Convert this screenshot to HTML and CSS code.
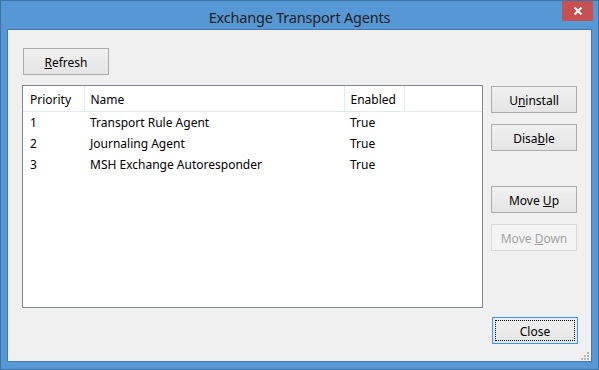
FILE: index.html
```html
<!DOCTYPE html>
<html lang="en">
<head>
<meta charset="UTF-8">
<title>Exchange Transport Agents</title>
<link rel="stylesheet" href="styles.css">
</head>
<body>

<div class="window">
    <!-- Title Bar -->
    <div class="title-bar">
        <span class="title">Exchange Transport Agents</span>
        <div class="close-box">
            <svg width="10" height="10" viewBox="0 0 10 10">
                <path d="M1.5 1.5 L8.5 8.5 M8.5 1.5 L1.5 8.5" stroke="#fff" stroke-width="2"/>
            </svg>
        </div>
    </div>

    <!-- Client Area -->
    <div class="client">
        <div class="top-row">
            <button class="btn refresh-btn"><u>R</u>efresh</button>
        </div>

        <div class="main-row">
            <div class="list-view">
                <table>
                    <colgroup>
                        <col class="col-priority">
                        <col class="col-name">
                        <col class="col-enabled">
                        <col>
                    </colgroup>
                    <thead>
                        <tr>
                            <th>Priority</th>
                            <th>Name</th>
                            <th>Enabled</th>
                            <th class="filler"></th>
                        </tr>
                    </thead>
                    <tbody>
                        <tr>
                            <td>1</td>
                            <td>Transport Rule Agent</td>
                            <td>True</td>
                            <td></td>
                        </tr>
                        <tr>
                            <td>2</td>
                            <td>Journaling Agent</td>
                            <td>True</td>
                            <td></td>
                        </tr>
                        <tr>
                            <td>3</td>
                            <td>MSH Exchange Autoresponder</td>
                            <td>True</td>
                            <td></td>
                        </tr>
                    </tbody>
                </table>
            </div>

            <div class="side-buttons">
                <button class="btn">U<u>n</u>install</button>
                <button class="btn">Disa<u>b</u>le</button>
                <button class="btn move-up">Move <u>U</u>p</button>
                <button class="btn" disabled>Move <u>D</u>own</button>
            </div>
        </div>

        <div class="bottom-row">
            <button class="btn default-btn"><span class="focus-rect">Close</span></button>
        </div>

        <!-- Size Grip -->
        <svg class="size-grip" width="9" height="9" viewBox="0 0 9 9">
            <rect x="6" y="0" width="2" height="2" fill="#b9b9b9"/>
            <rect x="3" y="3" width="2" height="2" fill="#b9b9b9"/>
            <rect x="6" y="3" width="2" height="2" fill="#b9b9b9"/>
            <rect x="0" y="6" width="2" height="2" fill="#b9b9b9"/>
            <rect x="3" y="6" width="2" height="2" fill="#b9b9b9"/>
            <rect x="6" y="6" width="2" height="2" fill="#b9b9b9"/>
        </svg>
    </div>
</div>

</body>
</html>
```

FILE: styles.css
```css
/* Basic Styles */
body {
    margin: 0;
    padding: 0;
    font-family: "Noto Sans", "Open Sans", sans-serif;
    font-size: 12px;
    color: #000;
}
.window {
    width: 599px;
    height: 370px;
    box-sizing: border-box;
    display: flex;
    flex-direction: column;
    background-color: #5697d5;
    border: 1px solid #3e73a8;
    padding: 0 6px 7px 6px;
}
/* Title Bar */
.title-bar {
    height: 28px;
    position: relative;
    display: flex;
    align-items: center;
    justify-content: center;
}
.title {
    font-size: 14.5px;
    color: #222;
    padding-top: 3px;
    letter-spacing: -0.2px;
}
.close-box {
    position: absolute;
    top: 0;
    right: -1px;
    width: 31px;
    height: 20px;
    background-color: #c75050;
    display: flex;
    align-items: center;
    justify-content: center;
}
/* Client Area */
.client {
    flex: 1;
    position: relative;
    background-color: #f0f0f0;
    border: 1px solid #4678aa;
    padding: 18px 13px 0 14px;
    display: flex;
    flex-direction: column;
}
.btn {
    width: 86px;
    height: 27px;
    box-sizing: border-box;
    border: 1px solid #acacac;
    background: linear-gradient(#f0f0f0, #e5e5e5);
    font-family: inherit;
    font-size: 12px;
    color: #000;
    padding: 1px 0 0 0;
    cursor: pointer;
}
.btn:disabled {
    border-color: #d9d9d9;
    background: #f4f4f4;
    color: #a3a3a3;
    cursor: default;
}
.refresh-btn {
    margin-left: 1px;
}
.main-row {
    display: flex;
    gap: 8px;
    margin-top: 10px;
}
/* List View */
.list-view {
    width: 461px;
    height: 223px;
    box-sizing: border-box;
    border: 1px solid #828790;
    background-color: #fff;
}
table {
    width: 100%;
    border-collapse: collapse;
    table-layout: fixed;
}
.col-priority {
    width: 61px;
}
.col-name {
    width: 260px;
}
.col-enabled {
    width: 60px;
}
th {
    height: 24px;
    font-weight: normal;
    text-align: left;
    padding: 1px 0 0 6px;
    border-right: 1px solid #e5ecf5;
    border-bottom: 1px solid #e1eaf4;
    white-space: nowrap;
}
th:first-child,
td:first-child {
    padding-left: 7px;
}
th.filler {
    border-right: none;
}
td {
    height: 21px;
    padding: 0 0 0 6px;
    white-space: nowrap;
}
/* Side Buttons */
.side-buttons {
    display: flex;
    flex-direction: column;
    gap: 11px;
    margin-top: 1px;
}
.move-up {
    margin-top: 24px;
}
.bottom-row {
    display: flex;
    justify-content: flex-end;
    margin-top: 9px;
}
.default-btn {
    border-color: #3399ff;
    padding: 2px;
}
.focus-rect {
    display: flex;
    align-items: center;
    justify-content: center;
    height: 100%;
    box-sizing: border-box;
    border: 1px dotted #000;
    padding-top: 1px;
}
.size-grip {
    position: absolute;
    right: 1px;
    bottom: 0;
}
```
